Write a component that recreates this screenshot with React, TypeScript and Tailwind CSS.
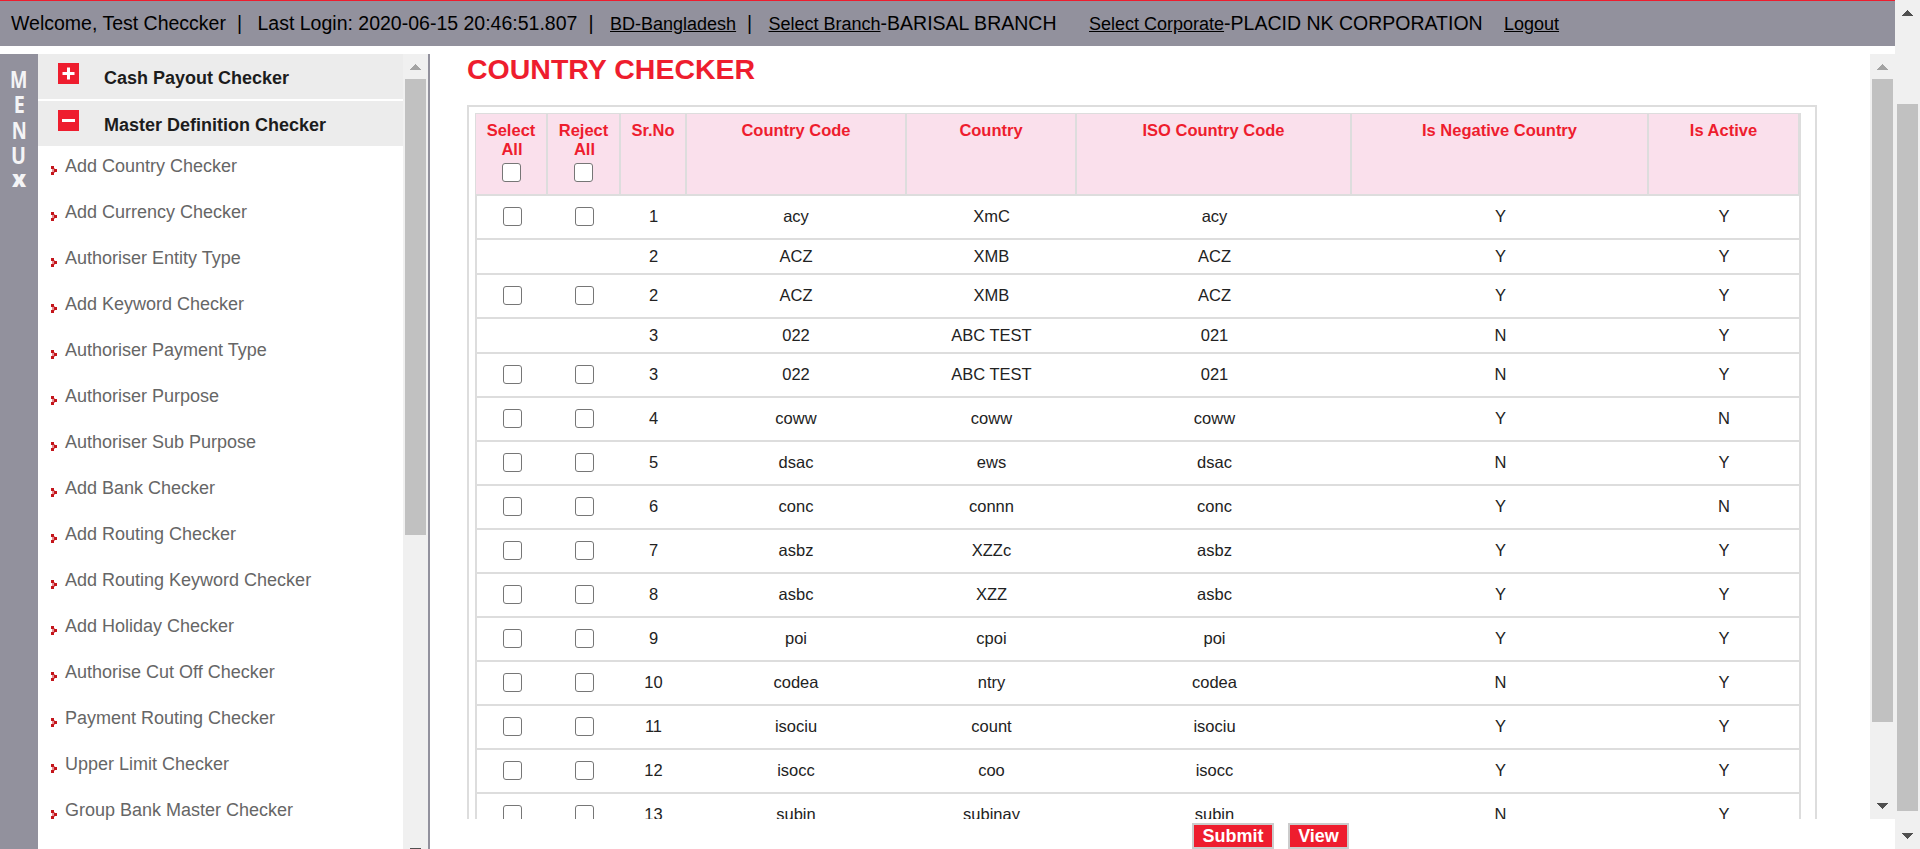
import React from "react";

const menuItems = [
  "Add Country Checker",
  "Add Currency Checker",
  "Authoriser Entity Type",
  "Add Keyword Checker",
  "Authoriser Payment Type",
  "Authoriser Purpose",
  "Authoriser Sub Purpose",
  "Add Bank Checker",
  "Add Routing Checker",
  "Add Routing Keyword Checker",
  "Add Holiday Checker",
  "Authorise Cut Off Checker",
  "Payment Routing Checker",
  "Upper Limit Checker",
  "Group Bank Master Checker",
];

type Row = { box: boolean; cells: string[] };

const rows: Row[] = [
  { box: true, cells: ["1", "acy", "XmC", "acy", "Y", "Y"] },
  { box: false, cells: ["2", "ACZ", "XMB", "ACZ", "Y", "Y"] },
  { box: true, cells: ["2", "ACZ", "XMB", "ACZ", "Y", "Y"] },
  { box: false, cells: ["3", "022", "ABC TEST", "021", "N", "Y"] },
  { box: true, cells: ["3", "022", "ABC TEST", "021", "N", "Y"] },
  { box: true, cells: ["4", "coww", "coww", "coww", "Y", "N"] },
  { box: true, cells: ["5", "dsac", "ews", "dsac", "N", "Y"] },
  { box: true, cells: ["6", "conc", "connn", "conc", "Y", "N"] },
  { box: true, cells: ["7", "asbz", "XZZc", "asbz", "Y", "Y"] },
  { box: true, cells: ["8", "asbc", "XZZ", "asbc", "Y", "Y"] },
  { box: true, cells: ["9", "poi", "cpoi", "poi", "Y", "Y"] },
  { box: true, cells: ["10", "codea", "ntry", "codea", "N", "Y"] },
  { box: true, cells: ["11", "isociu", "count", "isociu", "Y", "Y"] },
  { box: true, cells: ["12", "isocc", "coo", "isocc", "Y", "Y"] },
  { box: true, cells: ["13", "subin", "subinay", "subin", "N", "Y"] },
];

const headings = ["Sr.No", "Country Code", "Country", "ISO Country Code", "Is Negative Country", "Is Active"];

function Arrow({ down = false, className }: { down?: boolean; className: string }) {
  return (
    <svg width="11" height="6" viewBox="0 0 11 6" shapeRendering="crispEdges" className={"block shrink-0 " + className}>
      <path d={down ? "M0 0H11L5.5 6Z" : "M0 6H11L5.5 0Z"} fill="currentColor" />
    </svg>
  );
}

function Checkbox() {
  return (
    <input
      type="checkbox"
      className="block h-[19px] w-[19px] shrink-0 appearance-none rounded-[3px] border border-[#767676] bg-white"
    />
  );
}

function SectionHeader({ label, open }: { label: string; open: boolean }) {
  return (
    <div className="flex h-[45px] shrink-0 items-start bg-[#ececec] pl-5 pt-[9px]">
      <svg width="21" height="21" viewBox="0 0 21 21" className="block shrink-0">
        <rect width="21" height="21" fill="#ee1d2e" />
        <path d={open ? "M4 9H17V12H4Z" : "M4.5 9H9V4.5H12V9H16.5V12H12V16.5H9V12H4.5Z"} fill="#fff" />
      </svg>
      <span className="ml-[25px] mt-[5px] text-[18px] font-bold leading-5 text-[#1c1c1c]">{label}</span>
    </div>
  );
}

function Bullet() {
  return (
    <svg width="6" height="9" viewBox="0 0 6 9" shapeRendering="crispEdges" className="mt-[20px] block shrink-0">
      <path d="M1 3H3V6H1ZM3 2H4V7H3Z" fill="#e58f93" />
      <path d="M0 0H3V3H0ZM3 3H6V6H3ZM0 6H3V9H0Z" fill="#c4161c" />
    </svg>
  );
}

export default function App() {
  return (
    <div className="flex h-[849px] w-[1920px] overflow-hidden bg-white font-['Liberation_Sans',Arial,sans-serif]">
      <div className="flex w-[1895px] flex-col">
        <header className="flex h-[46px] shrink-0 items-baseline whitespace-pre border-t border-[#ee1d2e] bg-[#92919d] pl-[11px] pt-[10px] text-[19.5px] leading-[24px] text-black">
          <span className="w-[226px]">Welcome, Test Checcker</span>
          <span className="w-[20.5px]">|</span>
          <span className="w-[331px]">Last Login: 2020-06-15 20:46:51.807</span>
          <span className="w-[21.5px]">|</span>
          <a className="w-[137px] text-[18px] underline">BD-Bangladesh</a>
          <span className="w-[21.5px]">|</span>
          <span className="w-[320.5px]">
            <a className="text-[18px] underline">Select Branch</a>-BARISAL BRANCH
          </span>
          <span className="w-[415px]">
            <a className="text-[18px] underline">Select Corporate</a>-PLACID NK CORPORATION
          </span>
          <a className="text-[18px] underline">Logout</a>
        </header>

        <div className="mt-2 flex min-h-0 flex-1">
          <div className="flex w-[38px] shrink-0 flex-col items-center bg-[#92919d] pt-[13px] font-['Open_Sans',sans-serif] text-[22.5px] font-bold leading-[25.3px] text-[#f4f4f6]">
            <span className="scale-x-[0.82]">M</span>
            <span className="scale-x-[0.88]">E</span>
            <span className="scale-x-[0.82]">N</span>
            <span className="scale-x-[0.88]">U</span>
            <span className="-mt-[2px] font-extrabold">x</span>
          </div>

          <nav className="flex w-[365px] shrink-0 flex-col overflow-hidden">
            <SectionHeader label="Cash Payout Checker" open={false} />
            <div className="h-[2px] shrink-0" />
            <SectionHeader label="Master Definition Checker" open />
            {menuItems.map((m) => (
              <div key={m} className="flex h-[46px] shrink-0 items-start pl-[13px]">
                <Bullet />
                <span className="ml-[8px] mt-[10px] text-[18px] leading-5 text-[#666]">{m}</span>
              </div>
            ))}
          </nav>

          <div className="flex w-[25px] shrink-0 flex-col items-center bg-[#f0f0f0] pt-[10px]">
            <Arrow className="text-[#a3a3a3]" />
            <div className="mt-[9px] h-[456px] w-[21px] bg-[#c1c1c1]" />
            <div className="mt-auto h-px w-[11px] bg-[#505050]" />
          </div>
          <div className="w-[2px] shrink-0 bg-[#92919d]" />

          <main className="flex flex-1 flex-col pl-[37px]">
            <div className="flex h-[765px] shrink-0">
              <section className="h-full flex-1 overflow-hidden">
                <h1 className="h-[51px] text-[28.5px] font-bold leading-[30px] text-[#ee1d2e]">COUNTRY CHECKER</h1>
                <div className="w-[1350px] border-2 border-[#ddd] pl-[6px] pt-[6px]">
                  <div className="w-[1326px]">
                    <div className="grid h-[83px] grid-cols-[72px_73px_66px_220px_170px_275px_297px_1fr] border-b-2 border-l border-r-[3px] border-t border-[#ddd] bg-[#fae0ec] text-center text-[16.5px] font-bold leading-[19px] text-[#ee1d2e]">
                      {["Select", "Reject"].map((h) => (
                        <div key={h} className="flex flex-col items-center border-r-2 border-[#ddd] pt-[7px]">
                          <span>{h}</span>
                          <span className="mb-[4px] ml-[2px]">All</span>
                          <Checkbox />
                        </div>
                      ))}
                      {headings.map((h, i) => (
                        <div key={h} className={"border-[#ddd] pt-[7px] " + (i < 5 ? "border-r-2" : "")}>
                          {h}
                        </div>
                      ))}
                    </div>
                    {rows.map((r, i) => (
                      <div
                        key={i}
                        className={
                          "grid grid-cols-[71px_73px_65px_220px_171px_275px_297px_1fr] items-center border-x-2 border-b-2 border-[#ddd] pb-px text-center text-[16.5px] leading-5 text-[#222] " +
                          (r.box ? "h-[44px]" : "h-[35px]")
                        }
                      >
                        <div className="flex justify-center">{r.box && <Checkbox />}</div>
                        <div className="flex justify-center">{r.box && <Checkbox />}</div>
                        {r.cells.map((c, j) => (
                          <div key={j} className="-mt-px">{c}</div>
                        ))}
                      </div>
                    ))}
                  </div>
                </div>
              </section>
              <div className="flex w-[25px] shrink-0 flex-col items-center bg-[#f0f0f0] py-[10px]">
                <Arrow className="text-[#a3a3a3]" />
                <div className="mt-[9px] h-[643px] w-[21px] bg-[#c1c1c1]" />
                <Arrow down className="mt-auto text-[#505050]" />
              </div>
            </div>
            <div className="flex gap-[14px] pl-[725px] pt-[4px] text-[18px] font-bold text-white">
              <button className="h-[26px] w-[82px] border-2 border-[#ccc] bg-[#ee1d2e] leading-[21px]">Submit</button>
              <button className="h-[26px] w-[61px] border-2 border-[#ccc] bg-[#ee1d2e] leading-[21px]">View</button>
            </div>
          </main>
        </div>
      </div>

      <div className="flex w-[25px] flex-col items-center bg-[#f0f0f0] py-[10px]">
        <Arrow className="text-[#505050]" />
        <div className="mt-[88px] h-[707px] w-[21px] bg-[#c1c1c1]" />
        <Arrow down className="mt-auto text-[#505050]" />
      </div>
    </div>
  );
}
